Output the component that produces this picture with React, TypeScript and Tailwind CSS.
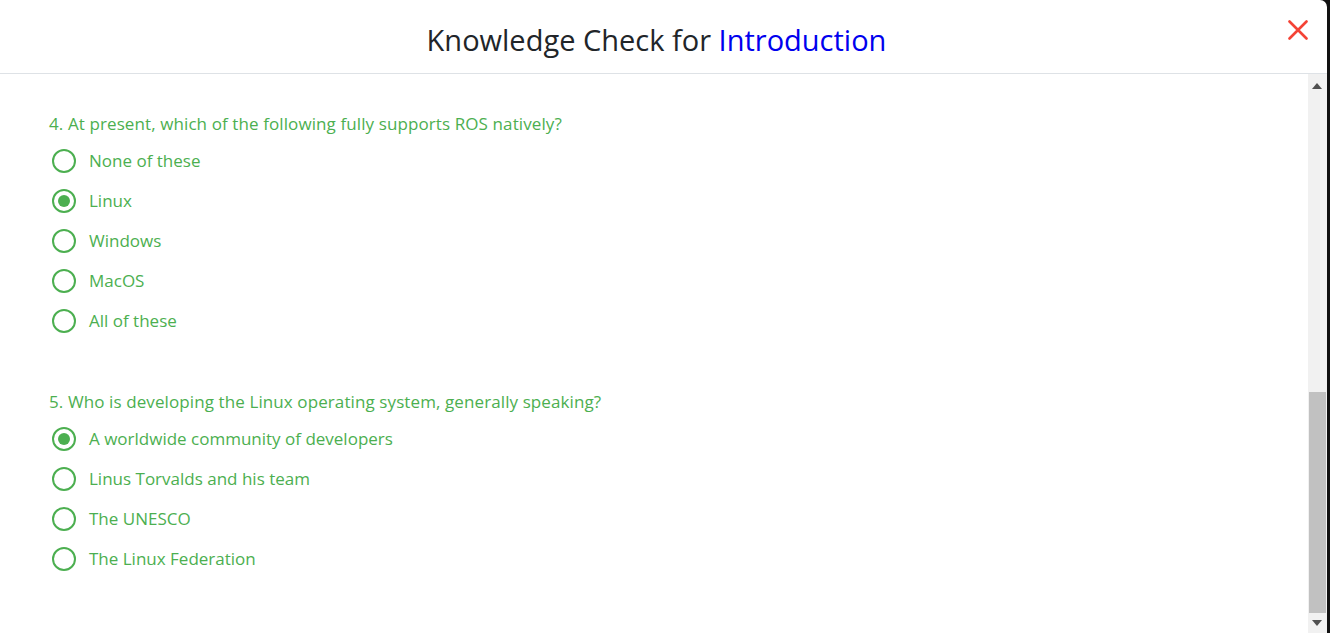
const questions = [
  {
    n: 4,
    text: "At present, which of the following fully supports ROS natively?",
    options: ["None of these", "Linux", "Windows", "MacOS", "All of these"],
    picked: 1,
  },
  {
    n: 5,
    text: "Who is developing the Linux operating system, generally speaking?",
    options: [
      "A worldwide community of developers",
      "Linus Torvalds and his team",
      "The UNESCO",
      "The Linux Federation",
    ],
    picked: 0,
  },
];

function Radio({ checked }: { checked: boolean }) {
  return (
    <span className="flex h-[24px] w-[24px] shrink-0 items-center justify-center rounded-full border-[2.5px] border-[#4caf50]">
      {checked && <span className="h-[12px] w-[12px] rounded-full bg-[#4caf50]" />}
    </span>
  );
}

function Question({ q }: { q: (typeof questions)[number] }) {
  return (
    <div className="flex flex-col">
      <p className="h-[24px] text-[17px] leading-[24px] tracking-[0.1px] text-[#4caf50]">
        {q.n}. {q.text}
      </p>
      <div className="mt-[5px] flex flex-col">
        {q.options.map((opt, i) => (
          <label key={opt} className="flex h-[40px] items-center gap-[13px] pl-[3px] text-[17px] text-[#4caf50]">
            <Radio checked={i === q.picked} />
            <span>{opt}</span>
          </label>
        ))}
      </div>
    </div>
  );
}

export default function App() {
  return (
    <div className="h-[633px] w-[1330px] overflow-hidden bg-[#111]" style={{ fontFamily: '"Open Sans", sans-serif' }}>
      <div className="flex h-full w-[1327px] flex-col overflow-hidden rounded-tr-[7px] bg-white">
        <header className="relative flex h-[74px] shrink-0 items-center justify-center border-b border-[#dee2e6] pr-[14px] pt-[6px]">
          <h1 className="text-[29px] font-medium text-[#212529]">
            Knowledge Check for <span className="text-[#0000ee]">Introduction</span>
          </h1>
          <button className="absolute right-[19px] top-[20px] h-[20px] w-[20px]">
            <svg viewBox="0 0 20 20" className="h-[20px] w-[20px]">
              <path d="M1.5 1.5 L18.5 18.5 M18.5 1.5 L1.5 18.5" stroke="#f44336" strokeWidth="2.6" strokeLinecap="round" />
            </svg>
          </button>
        </header>
        <div className="flex min-h-0 flex-1">
          <div className="flex flex-1 flex-col gap-[49px] pl-[49px] pt-[38px]">
            {questions.map((q) => (
              <Question key={q.n} q={q} />
            ))}
          </div>
          <div className="flex w-[19px] flex-col items-center bg-[#f1f1f1] pr-[1px]">
            <div className="flex h-[24px] items-center justify-center">
              <svg width="10" height="6" viewBox="0 0 10 6">
                <path d="M0 6 L5 0 L10 6 Z" fill="#505050" />
              </svg>
            </div>
            <div className="flex-1" />
            <div className="h-[221px] w-[17px] bg-[#c1c1c1]" />
            <div className="flex h-[20px] items-center justify-center">
              <svg width="10" height="6" viewBox="0 0 10 6">
                <path d="M0 0 L5 6 L10 0 Z" fill="#505050" />
              </svg>
            </div>
          </div>
        </div>
      </div>
    </div>
  );
}
